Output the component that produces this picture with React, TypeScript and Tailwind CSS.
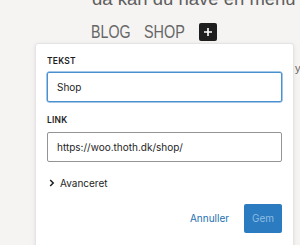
import React from "react";

export default function App() {
  const sys = { fontFamily: "Inter, 'Liberation Sans', sans-serif" };
  const page = { fontFamily: "'Liberation Sans', Arial, sans-serif" };
  return (
    <div className="relative w-[300px] h-[245px] overflow-hidden bg-[#f5f4f2]" style={sys}>
      {/* background page text */}
      <div
        className="absolute left-[92px] top-[-11px] whitespace-nowrap text-[18.5px] leading-[20px] text-[#5e5e5e]"
        style={page}
      >
        da kan du have en menu
      </div>
      <div className="absolute left-[91px] top-[23px] flex h-[18px] items-center gap-[14px] text-[18px] leading-[18px] text-[#666]" style={page}>
        <span className="inline-block w-[39px] whitespace-nowrap">
          <span className="inline-block origin-left scale-x-[0.79]">BLOG</span>
        </span>
        <span className="inline-block w-[41px] whitespace-nowrap">
          <span className="inline-block origin-left scale-x-[0.8]">SHOP</span>
        </span>
        <span className="flex h-[18px] w-[18px] items-center justify-center rounded-[2px] bg-[#1e1e1e]">
          <svg width="10" height="10" viewBox="0 0 10 10">
            <path d="M5 1v8M1 5h8" stroke="#fff" strokeWidth="1.6" />
          </svg>
        </span>
      </div>
      <div className="absolute left-[295px] top-[62px] text-[11px] leading-[12px] text-[#666]" style={page}>
        ye
      </div>

      {/* popover */}
      <div className="absolute left-[35px] top-[43px] h-[230px] w-[259px] rounded-[3px] border border-[#e4e4e4] bg-white shadow-[0_1px_4px_rgba(0,0,0,0.08)]">
        <div className="flex flex-col px-[11px] pt-[12px]">
          <label className="text-[8.5px] leading-[10px] font-semibold uppercase tracking-[0.2px] text-[#1e1e1e]">Tekst</label>
          <div className="mt-[6px] flex h-[30px] w-[235px] items-center rounded-[2px] border border-[#4a90d0] px-[9px] text-[10px] text-[#1e1e1e] shadow-[0_0_0_0.5px_#4a90d0]">
            Shop
          </div>
          <label className="mt-[13px] text-[8.5px] leading-[10px] font-semibold uppercase tracking-[0.2px] text-[#1e1e1e]">Link</label>
          <div className="mt-[7px] flex h-[30px] w-[235px] items-center rounded-[2px] border border-[#949494] px-[9px] text-[10px] text-[#1e1e1e]">
            https://woo.thoth.dk/shop/
          </div>
          <div className="mt-[14px] flex h-[14px] items-center gap-[5px] pl-[2px]">
            <svg width="6" height="8" viewBox="0 0 6 8">
              <path d="M1.2 1l3 3-3 3" fill="none" stroke="#1e1e1e" strokeWidth="1.5" />
            </svg>
            <span className="text-[10px] text-[#1e1e1e]">Avanceret</span>
          </div>
          <div className="mt-[14px] flex w-[235px] items-center justify-end gap-[15px]">
            <span className="text-[10px] text-[#2271b1]">Annuller</span>
            <span className="flex h-[29px] w-[38px] items-center justify-center rounded-[2px] bg-[#2a7bbf] text-[10px] text-[#8fbde3]">
              Gem
            </span>
          </div>
        </div>
      </div>
    </div>
  );
}
